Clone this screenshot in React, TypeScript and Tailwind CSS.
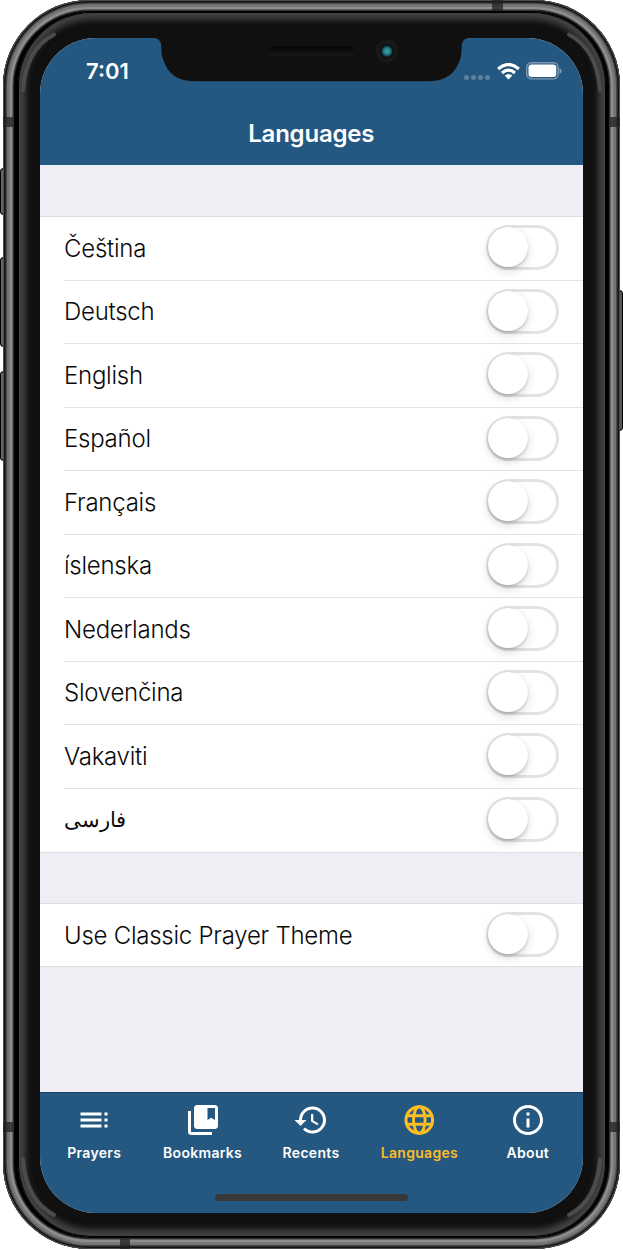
import React from "react";
import { MdToc, MdCollectionsBookmark, MdHistory, MdInfoOutline } from "react-icons/md";

const languages = ["Čeština", "Deutsch", "English", "Español", "Français", "íslenska", "Nederlands", "Slovenčina", "Vakaviti", "فارسی"];

function Globe({ className }: { className?: string }) {
  return (
    <svg className={className} viewBox="0 0 36 36" fill="none" stroke="currentColor" strokeWidth="2.9">
      <circle cx="18.3" cy="18" r="13.3" strokeWidth="3.1" />
      <ellipse cx="18.3" cy="18" rx="5.8" ry="13.3" />
      <path d="M5.5 13.7H31M5.5 22.3H31" />
    </svg>
  );
}

const tabs = [
  { label: "Prayers", icon: MdToc },
  { label: "Bookmarks", icon: MdCollectionsBookmark },
  { label: "Recents", icon: MdHistory },
  { label: "Languages", icon: Globe, active: true },
  { label: "About", icon: MdInfoOutline },
];

function Toggle() {
  return (
    <button
      role="switch"
      aria-checked="false"
      className="mr-[24px] mb-px flex h-[45px] w-[73px] shrink-0 items-center rounded-full border-[3px] border-[#e3e3e4] bg-white"
    >
      <span className="mb-px -ml-px size-[40px] rounded-full bg-white shadow-[0_4px_10px_rgba(0,0,0,0.15),0_2px_2px_rgba(0,0,0,0.12),0_0_1px_rgba(0,0,0,0.1)]" />
    </button>
  );
}

function Row({ label, last = false, className = "h-[63.5px]" }: { label: string; last?: boolean; className?: string }) {
  const persian = label === "فارسی";
  return (
    <li className={`flex pl-[24px] ${className}`}>
      <div className={`flex flex-1 items-center justify-between ${last ? "" : "border-b border-[#e2e2e4]"}`}>
        <span className={`pt-px font-light text-[#0a0a0a] ${persian ? "text-[20.5px]" : "text-[24px] tracking-[-0.25px]"}`}>{label}</span>
        <Toggle />
      </div>
    </li>
  );
}

function Notch() {
  return (
    <svg className="absolute left-[110px] top-0 h-[44px] w-[324px]" viewBox="150 37.5 324 44">
      <defs>
        <radialGradient id="lens">
          <stop offset="0" stopColor="#3aa5ae" />
          <stop offset=".55" stopColor="#237a84" />
          <stop offset="1" stopColor="#07191d" />
        </radialGradient>
        <linearGradient id="speaker" x2="0" y2="1">
          <stop offset="0" stopColor="#020202" />
          <stop offset="1" stopColor="#191919" />
        </linearGradient>
      </defs>
      <path d="M150 37H152C158 37.5 161 40 161.3 46C161.5 52 161.6 55 163.5 60C168 73 177 80.7 194 80.7H429C446 80.7 455 73 459.8 60C461.4 55 461.5 52 461.7 46C462 40 465 37.5 471 37H474Z" fill="#101010" />
      <rect x="269" y="45.8" width="85" height="9.4" rx="4.7" fill="url(#speaker)" />
      <circle cx="387" cy="50.7" r="11.5" fill="#181819" />
      <circle cx="387" cy="50.7" r="7" fill="#0a0e10" />
      <circle cx="387" cy="50.7" r="6" fill="url(#lens)" />
    </svg>
  );
}

function CornerShine() {
  return (
    <svg className="pointer-events-none absolute inset-0 h-[1250px] w-[623px]" viewBox="0 0 623 1250" fill="none" stroke="#4c4c4c" strokeWidth="4" strokeLinecap="round">
      <path d="M54 34.5C36 44 25 62 23 90" />
      <path d="M569 34.5C587 44 598 62 600 90" />
      <path d="M54 1215C36 1205.5 25 1187.5 23 1159.5" />
      <path d="M569 1215C587 1205.5 598 1187.5 600 1159.5" />
    </svg>
  );
}

export default function App() {
  return (
    <div className="relative h-[1250px] w-[623px] overflow-hidden bg-white font-['Inter','Noto_Sans',sans-serif]">
      <div className="absolute left-0 top-[168px] h-[47px] w-[6px] rounded-l-sm border-y border-l border-black bg-[#666]" />
      <div className="absolute left-0 top-[257px] h-[90px] w-[6px] rounded-l-sm border-y border-l border-black bg-[#666]" />
      <div className="absolute left-0 top-[371px] h-[90px] w-[6px] rounded-l-sm border-y border-l border-black bg-[#666]" />
      <div className="absolute left-[617px] top-[290px] h-[141px] w-[6px] rounded-r-sm border-y border-r border-black bg-[#555]" />
      <div className="relative ml-[3px] h-[1249px] w-[617px] rounded-[86px] bg-black px-[14.5px] py-[12px] shadow-[inset_0_0_1px_1px_#555,inset_0_0_0_2.5px_#101010,inset_0_0_1px_4px_#444,inset_0_0_1px_7px_#777,inset_0_0_1px_9.5px_#929292,inset_0_0_1px_11px_#303030]">
        <div className="h-full w-full rounded-[74px] bg-[#101010] pt-[25.5px] pl-[22.5px] shadow-[inset_0_0_0_1px_#000,inset_0_0_4px_6px_#414141,inset_0_0_4px_10px_#262626]">
          <main className="relative z-10 flex h-[1175px] w-[542.5px] flex-col overflow-hidden rounded-[56px] bg-[#efeef4]">
            <Notch />
            <header className="flex h-[127.5px] shrink-0 flex-col bg-[#255880] text-white">
              <div className="flex h-[68px] justify-between">
                <span className="ml-[46px] mt-[17px] text-[22px] leading-[32px] font-semibold">7:01</span>
                <div className="mr-[20.5px] mt-[24px] flex h-[19px] items-center">
                  <div className="mt-[12px] flex gap-[2px]">
                    {[0, 1, 2, 3].map((i) => <i key={i} className="size-[5px] rounded-full bg-white/25" />)}
                  </div>
                  <svg className="ml-[7px] h-[17px] w-[23px]" viewBox="0 0 23 17" fill="none" stroke="white" strokeWidth="3.2">
                    <path d="M1.2 6Q11.5-3 21.8 6M5 10Q11.5 4.4 18 10" />
                    <path d="M7.7 12.5Q11.5 9.5 15.3 12.5L11.5 16.5Z" fill="white" stroke="none" />
                  </svg>
                  <svg className="ml-[6.5px] h-[18px] w-[36px]" viewBox="0 0 36 18">
                    <rect x=".7" y=".7" width="31.5" height="16.2" rx="4.8" fill="none" stroke="#8197b0" strokeWidth="1.4" />
                    <rect x="2.5" y="2.5" width="27.8" height="12.6" rx="3" fill="white" />
                    <path d="M33.5 6Q35.7 7 35.7 9T33.5 12Z" fill="#8197b0" />
                  </svg>
                </div>
              </div>
              <h1 className="mt-[11px] text-center text-[24px] leading-[34px] font-semibold tracking-[-0.2px]">Languages</h1>
            </header>
            <ul className="mt-[51px] border-y border-[#dedee1] bg-white">
              {languages.map((l, i) => <Row key={l} label={l} last={i === languages.length - 1} />)}
            </ul>
            <ul className="mt-[50px] border-y border-[#dedee1] bg-white">
              <Row label="Use Classic Prayer Theme" last className="h-[62px]" />
            </ul>
            <nav className="mt-auto flex h-[120.5px] shrink-0 flex-col border-t border-[#173f61] bg-[#255880]">
              <div className="grid w-[542px] grid-cols-5">
                {tabs.map(({ label, icon: Icon, active }) => (
                  <a key={label} className={`flex flex-col items-center ${active ? "text-[#fdbd25]" : "text-white"}`}>
                    <Icon className="mt-[9px] size-[36px]" />
                    <span className="mt-[5px] text-[14px] leading-[20px] font-semibold tracking-[0.3px]">{label}</span>
                  </a>
                ))}
              </div>
              <div className="mx-auto mt-[30.5px] h-[7px] w-[193px] rounded-full bg-[#383838]" />
            </nav>
          </main>
        </div>
      </div>
      <CornerShine />
      <div className="absolute left-[3px] top-[117px] h-[10px] w-[10px] bg-[#222]/75" />
      <div className="absolute left-[610px] top-[117px] h-[10px] w-[10px] bg-[#222]/75" />
      <div className="absolute left-[3px] top-[1122px] h-[10px] w-[10px] bg-[#222]/75" />
      <div className="absolute left-[610px] top-[1122px] h-[10px] w-[10px] bg-[#222]/75" />
      <div className="absolute left-[492px] top-0 h-[11px] w-[11px] bg-[#222]/75" />
      <div className="absolute left-[120px] top-[1239px] h-[10px] w-[10px] bg-[#222]/75" />
    </div>
  );
}
